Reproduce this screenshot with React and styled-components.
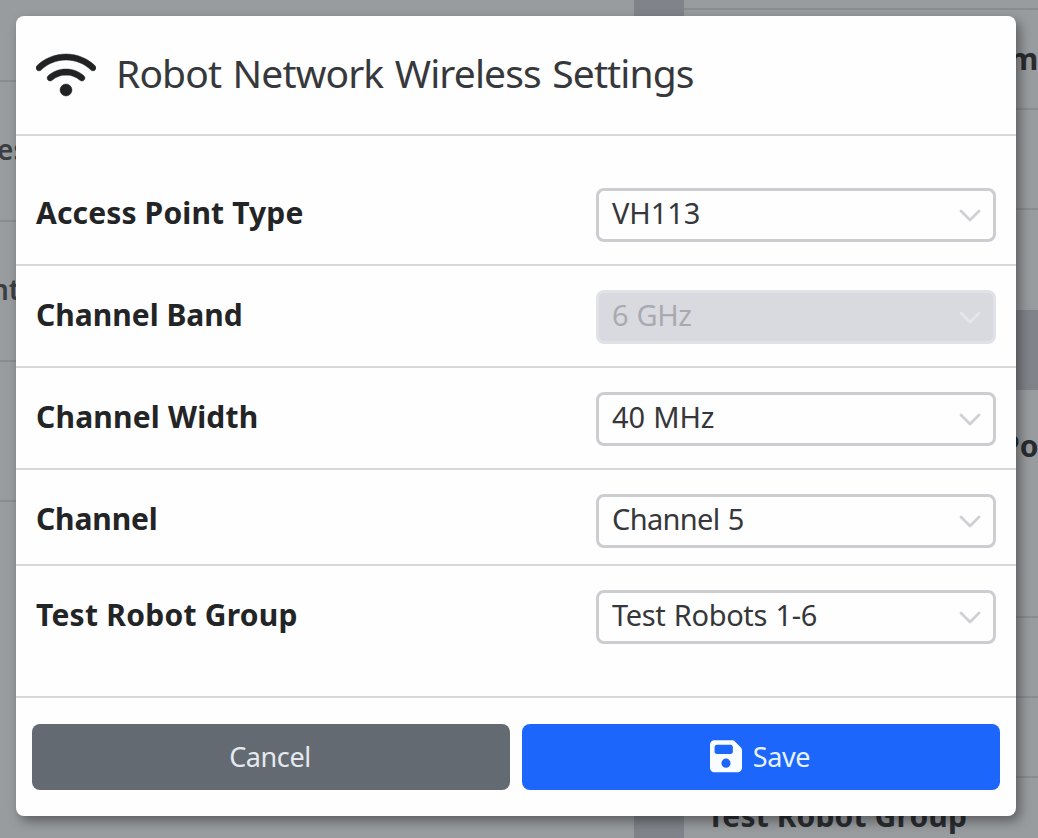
import React from "react";
import styled, { createGlobalStyle } from "styled-components";
import { FaWifi, FaFloppyDisk } from "react-icons/fa6";

const GlobalStyle = createGlobalStyle`
  *, *::before, *::after { box-sizing: border-box; }
  body {
    margin: 0;
    overflow: hidden;
    font-family: "Segoe UI", "Noto Sans", "Open Sans", sans-serif;
    color: #212529;
    background: #80848a;
  }
`;

const Screen = styled.div`
  position: relative;
  width: 1038px;
  height: 838px;
  overflow: hidden;
`;

const Backdrop = styled.div`
  display: flex;
  gap: 50px;
  height: 100%;
  background: #80848a;
`;

const Column = styled.div`
  display: flex;
  flex-direction: column;
  gap: 80px;
  width: ${(p) => p.$width}px;
  flex: none;
`;

const Panel = styled.div`
  background: #999c9f;
  flex: ${(p) => (p.$grow ? 1 : "none")};
  overflow: hidden;
`;

const PanelRow = styled.div`
  height: ${(p) => p.$height}px;
  padding-top: ${(p) => p.$top || 0}px;
  border-bottom: ${(p) => (p.$last ? "none" : "2px solid #8a8d90")};
  font-size: ${(p) => (p.$bold ? 30 : 28)}px;
  line-height: 38px;
  font-weight: ${(p) => (p.$bold ? 700 : 600)};
  color: ${(p) => (p.$bold ? "#2a2d30" : "#3b3e41")};
  white-space: nowrap;
`;

const PanelText = styled.span`
  display: block;
  margin-left: ${(p) => p.$indent}px;
  letter-spacing: ${(p) => p.$tracking || 0}px;
`;

const Modal = styled.section`
  position: absolute;
  top: 16px;
  left: 16px;
  width: 1000px;
  height: 800px;
  display: flex;
  flex-direction: column;
  background: #fefefe;
  border-radius: 8px;
  box-shadow: 4px 5px 12px rgba(0, 0, 0, 0.4);
`;

const Header = styled.header`
  display: flex;
  align-items: center;
  gap: 20px;
  height: 120px;
  padding: 0 20px 2px;
  border-bottom: 2px solid #d8d8db;
`;

const WifiIcon = styled(FaWifi)`
  width: 60px;
  height: 48px;
  margin-top: 2px;
  color: #212224;
  stroke: #212224;
  stroke-width: 5;
`;

const Title = styled.h1`
  margin: 0 0 2px;
  font-size: 39px;
  line-height: 52px;
  font-weight: 400;
  letter-spacing: -0.88px;
  word-spacing: 2.2px;
  color: #37383b;
  white-space: nowrap;
`;

const Body = styled.div`
  flex: 1;
  padding-top: 28px;
`;

const Row = styled.div`
  display: flex;
  justify-content: space-between;
  align-items: flex-start;
  padding: 24px 20px ${(p) => p.$bottom}px;
  border-bottom: ${(p) => (p.$last ? "none" : "2px solid #d8d8db")};
`;

const Label = styled.label`
  font-size: 30px;
  line-height: 50px;
  font-weight: 700;
  letter-spacing: ${(p) => p.$tracking}px;
  color: #232426;
  white-space: nowrap;
`;

const Select = styled.div`
  display: flex;
  align-items: center;
  justify-content: space-between;
  width: 400px;
  height: 54px;
  padding: 0 12px 4px 13px;
  border: 3px solid ${(p) => (p.$disabled ? "#e1e1e8" : "#cdccd1")};
  border-radius: 8px;
  background: ${(p) => (p.$disabled ? "#d9dae0" : "#fefefe")};
  color: ${(p) => (p.$disabled ? "#a9aaaf" : "#36373a")};
  font-size: 29px;
  line-height: 44px;
  letter-spacing: ${(p) => p.$tracking}px;
  word-spacing: 1.2px;
  white-space: nowrap;
`;

const Chevron = styled.svg`
  width: 22px;
  height: 14px;
  margin-top: 6px;
  fill: none;
  stroke: ${(p) => (p.$disabled ? "#e5e5ea" : "#d0cfd4")};
  stroke-width: 2.8;
  stroke-linecap: round;
  stroke-linejoin: round;
`;

const Footer = styled.footer`
  display: flex;
  gap: 12px;
  height: 120px;
  padding: 26px 16px;
  border-top: 2px solid #d8d8db;
`;

const Button = styled.button`
  flex: 1;
  height: 66px;
  display: flex;
  align-items: center;
  justify-content: center;
  gap: 11px;
  padding: 0 2px 2px 0;
  border: none;
  border-radius: 8px;
  background: ${(p) => (p.$primary ? "#1d66fb" : "#636a71")};
  color: ${(p) => (p.$primary ? "#e6f3ff" : "#e3e9ef")};
  font-family: inherit;
  font-size: 27px;
  letter-spacing: -0.4px;
`;

const SaveIcon = styled(FaFloppyDisk)`
  width: 32px;
  height: 36.6px;
  color: #fafdff;
`;

const settings = [
  { label: "Access Point Type", value: "VH113", bottom: 22, lt: 0.15, vt: -0.1 },
  { label: "Channel Band", value: "6 GHz", bottom: 22, lt: 0, vt: -0.4, disabled: true },
  { label: "Channel Width", value: "40 MHz", bottom: 22, lt: 0.2, vt: -0.2 },
  { label: "Channel", value: "Channel 5", bottom: 16, lt: -0.15, vt: -0.65 },
  { label: "Test Robot Group", value: "Test Robots 1-6", bottom: 20, lt: 0.25, vt: -0.35, last: true },
];

export default function App() {
  return (
    <Screen>
      <GlobalStyle />
      <Backdrop>
        <Column $width={634}>
          <Panel $grow>
            <PanelRow $height={82} />
            <PanelRow $height={140} $top={48}>
              <PanelText $indent={-3}>es</PanelText>
            </PanelRow>
            <PanelRow $height={140} $top={48}>
              <PanelText $indent={-9}>nt</PanelText>
            </PanelRow>
            <PanelRow $height={140} />
          </Panel>
        </Column>
        <Column $width={354}>
          <Panel>
            <PanelRow $height={10} />
            <PanelRow $height={100} $top={30} $bold>
              <PanelText $indent={325}>m</PanelText>
            </PanelRow>
            <PanelRow $height={100} />
            <PanelRow $height={100} $last />
          </Panel>
          <Panel $grow>
            <PanelRow $height={228} $top={37} $bold>
              <PanelText $indent={317}>Po</PanelText>
            </PanelRow>
            <PanelRow $height={80} />
            <PanelRow $height={80} />
            <PanelRow $height={80} $top={19} $bold>
              <PanelText $indent={23} $tracking={0.15}>Test Robot Group</PanelText>
            </PanelRow>
          </Panel>
        </Column>
      </Backdrop>
      <Modal>
        <Header>
          <WifiIcon />
          <Title>Robot Network Wireless Settings</Title>
        </Header>
        <Body>
          {settings.map((s) => (
            <Row key={s.label} $bottom={s.bottom} $last={s.last}>
              <Label $tracking={s.lt}>{s.label}</Label>
              <Select $disabled={s.disabled} $tracking={s.vt}>
                {s.value}
                <Chevron viewBox="0 0 22 14" $disabled={s.disabled}>
                  <path d="M2 2l9 9 9-9" />
                </Chevron>
              </Select>
            </Row>
          ))}
        </Body>
        <Footer>
          <Button>Cancel</Button>
          <Button $primary>
            <SaveIcon />
            Save
          </Button>
        </Footer>
      </Modal>
    </Screen>
  );
}
